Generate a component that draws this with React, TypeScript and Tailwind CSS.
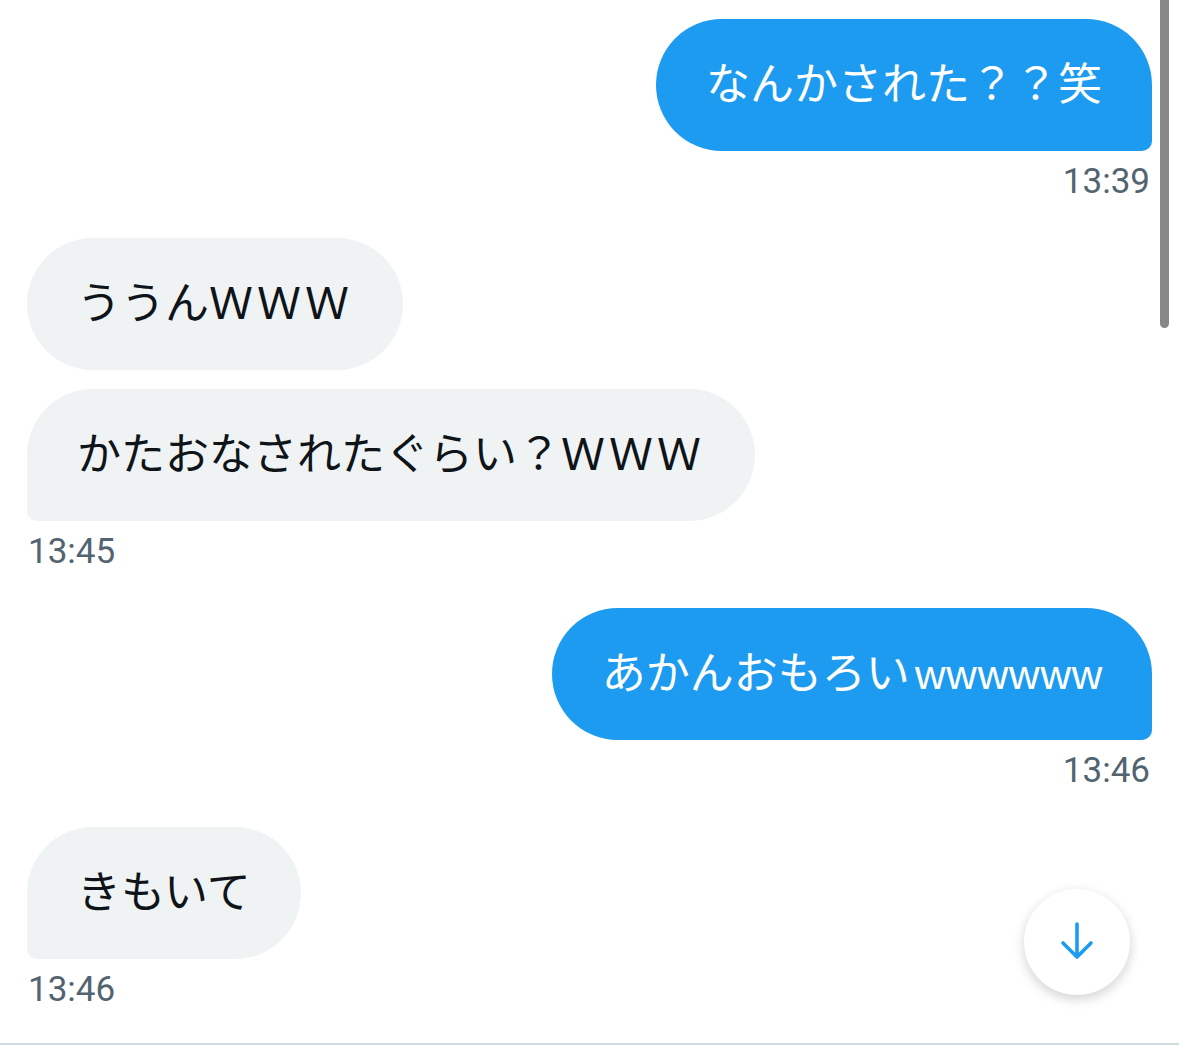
type Msg = {
  text: string;
  laugh?: string;
  laughClass?: string;
  mine: boolean;
  time?: string;
  tail?: boolean;
};

const messages: Msg[] = [
  { text: 'なんかされた？？笑', mine: true, time: '13:39', tail: true },
  { text: 'ううん', laugh: 'ＷＷＷ', laughClass: 'tracking-[4px]', mine: false },
  { text: 'かたおなされたぐらい？', laugh: 'ＷＷＷ', laughClass: 'tracking-[4px]', mine: false, time: '13:45', tail: true },
  {
    text: 'あかんおもろい',
    laugh: 'wwwwww',
    laughClass: 'text-[41px] tracking-[-1.5px] pl-[4px]',
    mine: true,
    time: '13:46',
    tail: true,
  },
  { text: 'きもいて', mine: false, time: '13:46', tail: true },
];

const jpFont = "font-['Noto_Sans_CJK_JP','Noto_Sans',sans-serif]";

function Bubble({ msg }: { msg: Msg }) {
  const shape = msg.mine
    ? msg.tail
      ? 'rounded-l-[66px] rounded-tr-[66px] rounded-br-[10px]'
      : 'rounded-[66px]'
    : msg.tail
      ? 'rounded-r-[66px] rounded-tl-[66px] rounded-bl-[10px]'
      : 'rounded-[66px]';
  const colors = msg.mine ? 'bg-[#1d9bf0] text-white' : 'bg-[#eff3f4] text-[#0f1419]';

  return (
    <div className={`flex ${msg.mine ? 'justify-end' : 'justify-start'}`}>
      <div
        className={`${shape} ${colors} ${jpFont} h-[132px] px-[50px] pt-[36px] pb-[44px] text-[44px] leading-[52px] whitespace-nowrap`}
      >
        {msg.text}
        {msg.laugh && <span className={msg.laughClass}>{msg.laugh}</span>}
      </div>
    </div>
  );
}

export default function App() {
  return (
    <div className="relative w-[1179px] h-[1064px] bg-white overflow-hidden">
      {/* scrollbar */}
      <div className="absolute right-[10px] top-0 w-[9px] h-[328px] rounded-b-full bg-[#878787]" />

      <div className="flex flex-col h-[1045px] px-[27px] pt-[19px] border-b-2 border-[#cfd9de]">
        {messages.map((msg, i) => {
          const next = messages[i + 1];
          return (
            <div key={i} className={msg.time ? (next ? 'mb-[36px]' : '') : 'mb-[19px]'}>
              <Bubble msg={msg} />
              {msg.time && (
                <div
                  className={`mt-[11px] h-[40px] text-[35px] leading-[40px] text-[#536471] font-['Roboto','Liberation_Sans',sans-serif] ${
                    msg.mine ? 'text-right pr-[2px]' : 'text-left pl-[1px]'
                  }`}
                >
                  {msg.time}
                </div>
              )}
            </div>
          );
        })}
      </div>

      {/* scroll-to-bottom button */}
      <button className="absolute left-[1024px] top-[889px] w-[106px] h-[106px] rounded-full bg-white shadow-[0_4px_12px_rgba(0,0,0,0.18)] flex items-center justify-center">
        <svg width="40" height="40" viewBox="0 0 40 40" fill="none" className="-mt-[2px]">
          <path
            d="M20 3v33M6 22l14 14 14-14"
            stroke="#1d9bf0"
            strokeWidth="3.6"
            strokeLinecap="round"
            strokeLinejoin="round"
          />
        </svg>
      </button>
    </div>
  );
}
